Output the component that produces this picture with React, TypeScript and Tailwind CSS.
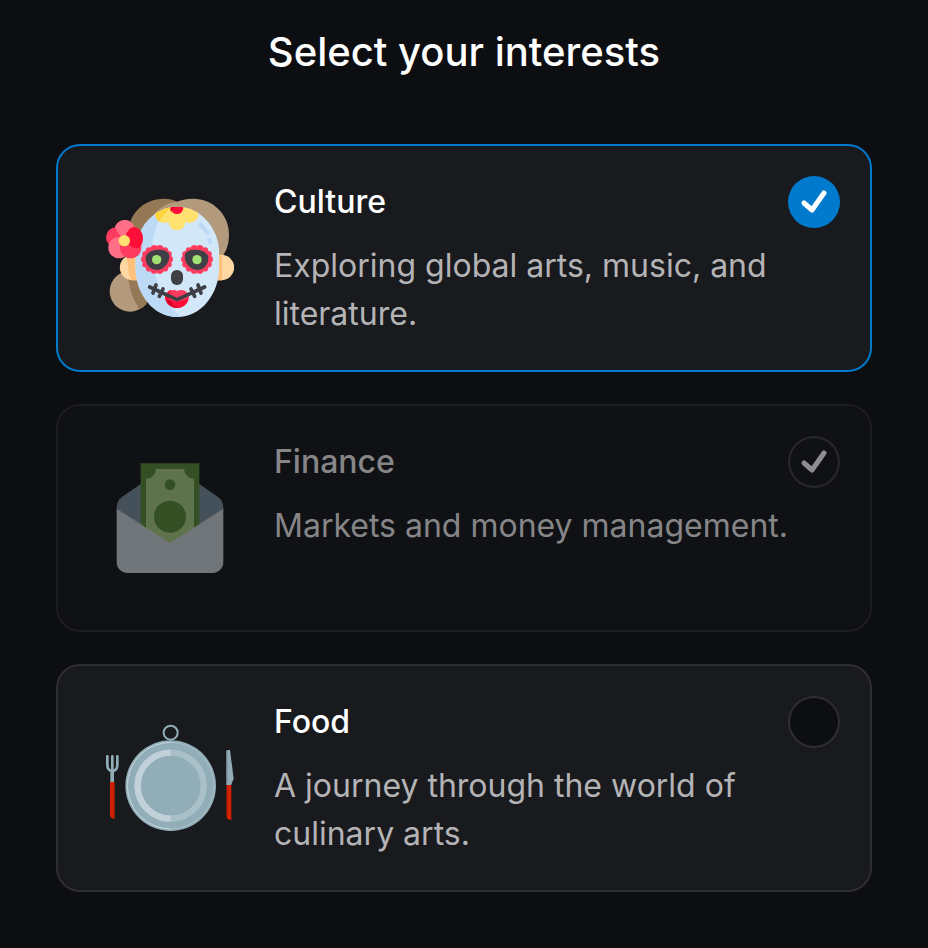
import React, { useState } from "react";

function CultureArt() {
  const scallops = Array.from({ length: 14 }, (_, i) => {
    const a = (i / 14) * Math.PI * 2;
    return { x: Math.cos(a) * 38, y: Math.sin(a) * 34 };
  });
  return (
    <svg viewBox="30 24 384 384" className="size-full" aria-hidden="true">
      <defs>
        <clipPath id="face">
          <path d="M244 62C312 62 370 124 370 205V240C370 325 315 393 244 393C173 393 118 325 118 240V205C118 124 176 62 244 62Z" />
        </clipPath>
        <clipPath id="ball">
          <circle cx="102" cy="316" r="61" />
        </clipPath>
        <clipPath id="blossom">
          <circle cx="204" cy="84" r="27" />
          <circle cx="243" cy="108" r="25" />
          <circle cx="281" cy="84" r="27" />
          <path d="M200 60H286V98H200Z" />
        </clipPath>
      </defs>
      <circle cx="102" cy="316" r="61" fill="#b39a7c" />
      <path d="M94 250C98 310 112 350 140 378H190V250Z" fill="#957856" clipPath="url(#ball)" />
      <path d="M118 330L152 354L140 364L128 368Z" fill="#957856" />
      <path d="M96 150C94 85 142 38 204 38C220 38 232 41 243 47V230H118Z" fill="#957856" />
      <path d="M160 108C180 70 208 50 243 47C258 41 274 38 290 38C352 38 399 86 399 145C399 168 394 190 382 207V240H240L160 160Z" fill="#b39a7c" />
      <path d="M130 206H110A38 38 0 0 0 110 283H130Z" fill="#ffd7a3" />
      <path d="M92 206H130V283H105C97 262 94 235 92 206Z" fill="#ffc07c" />
      <path d="M360 206H376A38 38 0 0 1 376 283H360Z" fill="#ffd7a3" />
      <path d="M360 206H378V283H360Z" fill="#ffc07c" />
      <g clipPath="url(#face)">
        <path d="M110 50H380V400H110Z" fill="#d2e7f8" />
        <path d="M110 50H250C198 74 169 118 169 190C169 285 205 355 264 400H110Z" fill="#bcdaf5" />
        <g clipPath="url(#blossom)">
          <path d="M170 50H320V140H170Z" fill="#ffe170" />
          <path d="M170 50H250C222 64 200 84 187 114H170Z" fill="#ffd33b" />
        </g>
        <circle cx="243" cy="65" r="19" fill="#ff0f38" />
        <path d="M222 50H250L224 78Z" fill="#e3002b" />
      </g>
      <path d="M314 116Q326 127 335 142" fill="none" stroke="#bcdaf5" strokeWidth="12" strokeLinecap="round" />
      <path d="M341 161L343 168" stroke="#bcdaf5" strokeWidth="13" strokeLinecap="round" />
      {[183, 303].map((cx) => (
        <g key={cx} transform={`translate(${cx} 220)`} fill="#ff3c60">
          <ellipse rx="40" ry="36" />
          {scallops.map((s, i) => (
            <circle key={i} cx={s.x} cy={s.y} r="10" />
          ))}
        </g>
      ))}
      <path d="M149 216C149 201 166 191 187 191C207 191 220 197 220 211C220 231 204 252 184 252C164 252 149 238 149 216Z" fill="#3f4045" />
      <path d="M337 216C337 201 320 191 299 191C279 191 266 197 266 211C266 231 282 252 302 252C322 252 337 238 337 216Z" fill="#3f4045" />
      <circle cx="182" cy="221" r="14" fill="#a2e173" />
      <circle cx="303" cy="221" r="14" fill="#a2e173" />
      <rect x="225" y="252" width="36" height="45" rx="17" fill="#3f4045" />
      <path d="M207 332C209 353 224 366 243 366C263 366 277 353 279 332Z" fill="#ff0f38" />
      <path d="M207 332C209 353 224 366 247 366C232 357 224 347 221 332Z" fill="#d9002b" />
      <path d="M207 338C207 322 218 312 232 312C237 312 240 313 243 315C247 313 251 312 256 312C269 312 279 322 279 338L243 347Z" fill="#ff3c60" />
      <path d="M207 338C207 322 216 314 226 312C221 321 220 331 222 342Z" fill="#ff0f38" />
      <g fill="none" stroke="#3f4045" strokeWidth="11" strokeLinecap="round" strokeLinejoin="round">
        <path d="M161 303L243 341L326 303" />
        <path d="M180 297L171 321M201 309L190 331M306 297L315 321M285 309L296 331" />
      </g>
      <circle cx="86" cy="133" r="31" fill="#ff6f87" />
      <circle cx="60" cy="154" r="30" fill="#ff3c60" />
      <circle cx="69" cy="185" r="32" fill="#ff6f87" />
      <circle cx="104" cy="185" r="32" fill="#ff3c60" />
      <path d="M86 163C84 145 90 128 104 124C122 118 142 134 141 158C140 173 134 184 125 187C112 187 96 178 86 163Z" fill="#ff0f38" />
      <path d="M86 163C70 150 62 134 58 124A31 31 0 0 1 98 104Q110 112 113 122C98 126 90 140 86 163Z" fill="#ff6f87" />
      <circle cx="85" cy="164" r="17" fill="#ffe170" />
    </svg>
  );
}

function FinanceArt() {
  return (
    <svg viewBox="0 12 384 384" className="size-full" aria-hidden="true">
      <path d="M32 178C32 160 36 150 48 141L104 102H280L336 141C348 150 352 160 352 178L192 290Z" fill="#7b919f" />
      <path d="M104 40H280V260L192 300L104 260Z" fill="#588d33" />
      <path d="M120 87A32 32 0 0 0 150 57H234A32 32 0 0 0 264 87V250H120Z" fill="#abd283" />
      <circle cx="192" cy="104" r="16" fill="#588d33" />
      <path d="M104 220H280V232L192 290L104 232Z" fill="#abd283" />
      <path d="M104 220H120V244L104 232ZM264 220H280V232L264 244Z" fill="#588d33" />
      <circle cx="192" cy="200" r="48" fill="#588d33" />
      <path d="M32 176L192 279L352 176V337C352 355 338 369 320 369H64C46 369 32 355 32 337Z" fill="#cfd8dd" />
    </svg>
  );
}

function FoodArt() {
  return (
    <svg viewBox="30 -6 384 384" className="size-full" aria-hidden="true">
      <circle cx="224" cy="50" r="21" fill="none" stroke="#90adb8" strokeWidth="6" />
      <circle cx="224" cy="209" r="136" fill="#90adb8" />
      <circle cx="224" cy="209" r="130" fill="none" stroke="#a9c0c9" strokeWidth="3" />
      <path d="M224 79A130 130 0 0 0 224 339" fill="none" stroke="#c2d1d9" strokeWidth="3" />
      <circle cx="224" cy="209" r="99" fill="none" stroke="#a9c0c9" strokeWidth="19" />
      <path d="M224 110A99 99 0 0 0 224 308" fill="none" stroke="#c2d1d9" strokeWidth="19" />
      <path d="M34 121V146Q34 164 49 164Q64 164 64 146V121M49 121V190" fill="none" stroke="#90adb8" strokeWidth="8" strokeLinecap="round" />
      <path d="M43 165H54V198H43Z" fill="#90adb8" />
      <path d="M42 198H56V308Q42 308 42 296Z" fill="#d32100" />
      <path d="M53 198H56V308H53Z" fill="#8f1b08" />
      <path d="M391 104Q392 101 402 102L413 188L405 208H391Z" fill="#90adb8" />
      <path d="M391 104H394V208H391Z" fill="#6c818a" />
      <path d="M392 207H406V312Q392 311 392 302Z" fill="#d32100" />
      <path d="M391 207H394V306L391 300Z" fill="#8f1b08" />
    </svg>
  );
}

type Interest = {
  id: string;
  title: string;
  description: string;
  art: React.ReactNode;
  disabled?: boolean;
};

const interests: Interest[] = [
  {
    id: "culture",
    title: "Culture",
    description: "Exploring global arts, music, and literature.",
    art: <CultureArt />,
  },
  {
    id: "finance",
    title: "Finance",
    description: "Markets and money management.",
    art: <FinanceArt />,
    disabled: true,
  },
  {
    id: "food",
    title: "Food",
    description: "A journey through the world of culinary arts.",
    art: <FoodArt />,
  },
];

const styles = {
  active: {
    card: "cursor-pointer border-[#007acc] bg-[#191a1d]",
    art: "",
    title: "text-white",
    text: "text-[#b4b4b6]",
    box: "bg-[#007acc] ring-[#007acc]",
    check: "text-white",
  },
  idle: {
    card: "cursor-pointer border-[#2e2f33] bg-[#191a1d]",
    art: "",
    title: "text-white",
    text: "text-[#b4b4b6]",
    box: "bg-[#0d0e12] ring-[#2e2f33]",
    check: "text-white",
  },
  disabled: {
    card: "cursor-not-allowed border-[#1c1d20] bg-[#101114]",
    art: "opacity-50",
    title: "text-[#868689]",
    text: "text-[#868689]",
    box: "bg-[#101114] ring-[#28292c]",
    check: "text-[#8e8e90]",
  },
};

function InterestCard({
  item,
  checked,
  onChange,
}: {
  item: Interest;
  checked: boolean;
  onChange: () => void;
}) {
  const s = item.disabled ? styles.disabled : checked ? styles.active : styles.idle;
  return (
    <label htmlFor={item.id} className={`flex gap-6 rounded-3xl border-2 p-8 ${s.card}`}>
      <span className={`size-40 shrink-0 p-4 ${s.art}`}>{item.art}</span>
      <span className="flex min-w-0 flex-1 flex-col gap-4">
        <span className="flex items-center justify-between">
          <span className={`text-[32px] leading-12 font-medium ${s.title}`}>{item.title}</span>
          <span className="grid size-12 shrink-0">
            <input
              id={item.id}
              type="checkbox"
              checked={checked}
              disabled={item.disabled}
              onChange={onChange}
              className={`col-start-1 row-start-1 size-12 appearance-none rounded-full ring-2 ${s.box}`}
            />
            {checked && (
              <svg
                viewBox="0 0 48 48"
                className={`pointer-events-none col-start-1 row-start-1 size-12 ${s.check}`}
                fill="none"
                stroke="currentColor"
                strokeWidth="5"
                strokeLinecap="round"
                strokeLinejoin="round"
                aria-hidden="true"
              >
                <path d="M14 25L22 32L34 15" />
              </svg>
            )}
          </span>
        </span>
        <span className={`text-[32px] leading-12 ${s.text}`}>{item.description}</span>
      </span>
    </label>
  );
}

export default function App() {
  const [selected, setSelected] = useState<string[]>(["culture", "finance"]);
  const toggle = (id: string) =>
    setSelected((s) => (s.includes(id) ? s.filter((x) => x !== id) : [...s, id]));

  return (
    <main className="min-h-screen bg-[#0d0e12] px-14 pt-6 pb-14 font-['Inter',sans-serif]">
      <h1 className="text-center text-[40px] leading-14 font-medium text-white">
        Select your interests
      </h1>
      <div className="mt-16 flex flex-col gap-8">
        {interests.map((item) => (
          <InterestCard
            key={item.id}
            item={item}
            checked={selected.includes(item.id)}
            onChange={() => toggle(item.id)}
          />
        ))}
      </div>
    </main>
  );
}
